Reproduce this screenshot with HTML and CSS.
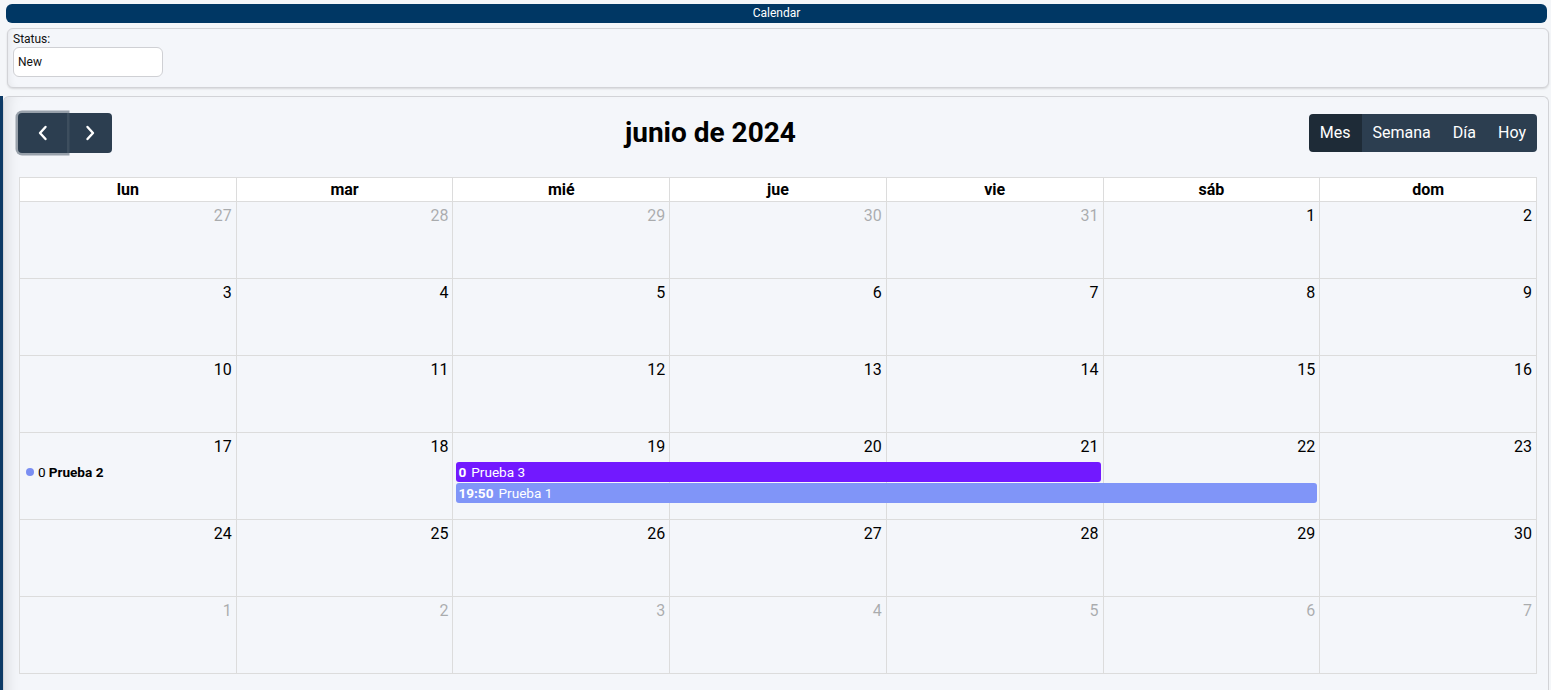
FILE: index.html
```html
<!DOCTYPE html>
<html lang="es">
<head>
<meta charset="utf-8">
<title>Calendar</title>
<link rel="stylesheet" href="styles.css">
</head>
<body>
<div class="titlebar">Calendar</div>
<div class="status-panel">
  <label class="status-label" for="st">Status:</label>
  <div class="status-input" id="st">New</div>
</div>
<div class="cal-wrap">
  <div class="cal-panel">
    <div class="toolbar">
      <div class="btn-group">
        <button class="btn btn-prev" aria-label="prev"><svg width="12" height="16" viewBox="0 0 12 16"><path d="M8.5 2 L3 8 L8.5 14" fill="none" stroke="#fff" stroke-width="2.4" stroke-linecap="round" stroke-linejoin="round"/></svg></button>
        <button class="btn btn-next" aria-label="next"><svg width="12" height="16" viewBox="0 0 12 16"><path d="M3.5 2 L9 8 L3.5 14" fill="none" stroke="#fff" stroke-width="2.4" stroke-linecap="round" stroke-linejoin="round"/></svg></button>
      </div>
      <h2 class="title">junio de 2024</h2>
      <div class="btn-group views">
        <button class="vbtn active">Mes</button>
        <button class="vbtn">Semana</button>
        <button class="vbtn">Día</button>
        <button class="vbtn">Hoy</button>
      </div>
    </div>
    <div class="month">
      <div class="head">
        <div class="hcell">lun</div><div class="hcell">mar</div><div class="hcell">mié</div><div class="hcell">jue</div><div class="hcell">vie</div><div class="hcell">sáb</div><div class="hcell">dom</div>
      </div>
      <div class="week">
        <div class="day other"><span class="num">27</span></div><div class="day other"><span class="num">28</span></div><div class="day other"><span class="num">29</span></div><div class="day other"><span class="num">30</span></div><div class="day other"><span class="num">31</span></div><div class="day"><span class="num">1</span></div><div class="day"><span class="num">2</span></div>
      </div>
      <div class="week">
        <div class="day"><span class="num">3</span></div><div class="day"><span class="num">4</span></div><div class="day"><span class="num">5</span></div><div class="day"><span class="num">6</span></div><div class="day"><span class="num">7</span></div><div class="day"><span class="num">8</span></div><div class="day"><span class="num">9</span></div>
      </div>
      <div class="week">
        <div class="day"><span class="num">10</span></div><div class="day"><span class="num">11</span></div><div class="day"><span class="num">12</span></div><div class="day"><span class="num">13</span></div><div class="day"><span class="num">14</span></div><div class="day"><span class="num">15</span></div><div class="day"><span class="num">16</span></div>
      </div>
      <div class="week tall">
        <div class="day"><span class="num">17</span></div><div class="day"><span class="num">18</span></div><div class="day"><span class="num">19</span></div><div class="day"><span class="num">20</span></div><div class="day"><span class="num">21</span></div><div class="day"><span class="num">22</span></div><div class="day"><span class="num">23</span></div>
        <div class="ev-dot"><span class="dot"></span><span class="ev-time">0</span><b class="ev-title">Prueba 2</b></div>
        <div class="ev-bar ev-purple"><b class="bar-time">0</b><span class="bar-title">Prueba 3</span></div>
        <div class="ev-bar ev-blue"><b class="bar-time">19:50</b><span class="bar-title">Prueba 1</span></div>
      </div>
      <div class="week">
        <div class="day"><span class="num">24</span></div><div class="day"><span class="num">25</span></div><div class="day"><span class="num">26</span></div><div class="day"><span class="num">27</span></div><div class="day"><span class="num">28</span></div><div class="day"><span class="num">29</span></div><div class="day"><span class="num">30</span></div>
      </div>
      <div class="week">
        <div class="day other"><span class="num">1</span></div><div class="day other"><span class="num">2</span></div><div class="day other"><span class="num">3</span></div><div class="day other"><span class="num">4</span></div><div class="day other"><span class="num">5</span></div><div class="day other"><span class="num">6</span></div><div class="day other"><span class="num">7</span></div>
      </div>
    </div>
  </div>
</div>
</body>
</html>
```
FILE: styles.css
```css
* { box-sizing: border-box; }
html, body { height: 100%; }
body {
  margin: 0;
  background: #f4f6f9;
  font-family: Roboto, "Liberation Sans", Arial, sans-serif;
  color: #000;
  overflow: hidden;
}
.titlebar {
  margin: 4px 4px 0 6px;
  height: 19px;
  background: #003764;
  border-radius: 6px;
  color: #fff;
  font-size: 12px;
  line-height: 19px;
  text-align: center;
}
.status-panel {
  margin: 5px 2px 0 7px;
  height: 60px;
  border: 1px solid #d2d3d7;
  border-radius: 6px;
  background: #f4f6fa;
  box-shadow: 0 1px 2px rgba(0,0,0,0.12), inset 6px 0 8px -6px rgba(0,0,0,0.08);
  padding: 3px 5px 0 5px;
}
.status-label {
  display: block;
  font-size: 12px;
  line-height: 15px;
  color: #111;
}
.status-input {
  margin-top: 0;
  width: 150px;
  height: 30px;
  background: #fff;
  border: 1px solid #cfd0d4;
  border-radius: 6px;
  font-size: 12px;
  line-height: 28px;
  padding-left: 4px;
  color: #111;
}
.cal-wrap {
  margin-top: 8px;
  border-left: 3px solid #0d3a66;
  height: 600px;
}
.cal-panel {
  height: 100%;
  margin-right: 2px;
  border: 1px solid #d2d3d7;
  border-bottom: none;
  border-radius: 6px 6px 0 0;
  background: #f4f6fa;
  box-shadow: inset 14px 0 14px -10px rgba(0,0,0,0.1);
  padding: 16px 11px 0 15px;
}
.toolbar {
  display: flex;
  align-items: center;
  justify-content: space-between;
  height: 40px;
  margin-bottom: 24px;
}
.btn-group { display: flex; }
.btn {
  border: none;
  margin: 0;
  background: #2c3e50;
  height: 40px;
  display: flex;
  align-items: center;
  justify-content: center;
  padding: 0;
  cursor: pointer;
}
.btn-prev {
  width: 49px;
  margin-left: -1px;
  border-radius: 4px 0 0 4px;
  box-shadow: 0 0 0 2.5px rgba(76,91,106,0.55);
  position: relative;
  z-index: 1;
}
.btn-next {
  width: 45px;
  border-radius: 0 4px 4px 0;
}
.title {
  margin: 0;
  font-size: 28px;
  font-weight: 700;
  line-height: 34px;
}
.views { height: 38px; border-radius: 4px; overflow: hidden; }
.vbtn {
  border: none;
  margin: 0;
  background: #2c3e50;
  color: #fff;
  font-family: Roboto, "Liberation Sans", Arial, sans-serif;
  font-size: 16px;
  line-height: 38px;
  height: 38px;
  padding: 0 11px;
}
.vbtn.active { background: #1e2b37; }
.month {
  border-left: 1px solid #dcdcdc;
  border-top: 1px solid #dcdcdc;
}
.head, .week {
  display: grid;
  grid-template-columns: repeat(7, 1fr);
}
.hcell {
  height: 24px;
  background: #fff;
  border-right: 1px solid #dcdcdc;
  border-bottom: 1px solid #dcdcdc;
  font-size: 16px;
  font-weight: 700;
  text-align: center;
  line-height: 23px;
}
.week {
  height: 77px;
  grid-template-rows: 29px 21px 21px 1fr;
}
.week.tall { height: 87px; }
.day {
  grid-row: 1 / -1;
  border-right: 1px solid #dcdcdc;
  border-bottom: 1px solid #dcdcdc;
  display: flex;
  justify-content: flex-end;
  align-items: flex-start;
  padding: 4px 4px 0 0;
}
.num { font-size: 16px; line-height: 20px; }
.day.other .num { opacity: 0.3; }
.week .day:nth-child(1) { grid-column: 1; }
.week .day:nth-child(2) { grid-column: 2; }
.week .day:nth-child(3) { grid-column: 3; }
.week .day:nth-child(4) { grid-column: 4; }
.week .day:nth-child(5) { grid-column: 5; }
.week .day:nth-child(6) { grid-column: 6; }
.week .day:nth-child(7) { grid-column: 7; }
.ev-dot {
  grid-row: 2;
  grid-column: 1;
  height: 20px;
  display: flex;
  align-items: center;
  margin-left: 6px;
  font-size: 13.6px;
  white-space: nowrap;
}
.dot {
  width: 8px;
  height: 8px;
  border-radius: 50%;
  background: #7a8ef2;
  margin-right: 4px;
}
.ev-time { margin-right: 3px; }
.ev-title { font-weight: 700; }
.ev-bar {
  height: 20px;
  margin: 0 3px 0 3px;
  border-radius: 3px;
  color: #fff;
  font-size: 13.6px;
  line-height: 20px;
  padding-left: 2px;
  white-space: nowrap;
  overflow: hidden;
}
.ev-purple { grid-row: 2; grid-column: 3 / 6; background: #7219ff; }
.ev-blue { grid-row: 3; grid-column: 3 / 7; background: #8095f8; }
.bar-time { font-weight: 700; margin-right: 5px; }
```
